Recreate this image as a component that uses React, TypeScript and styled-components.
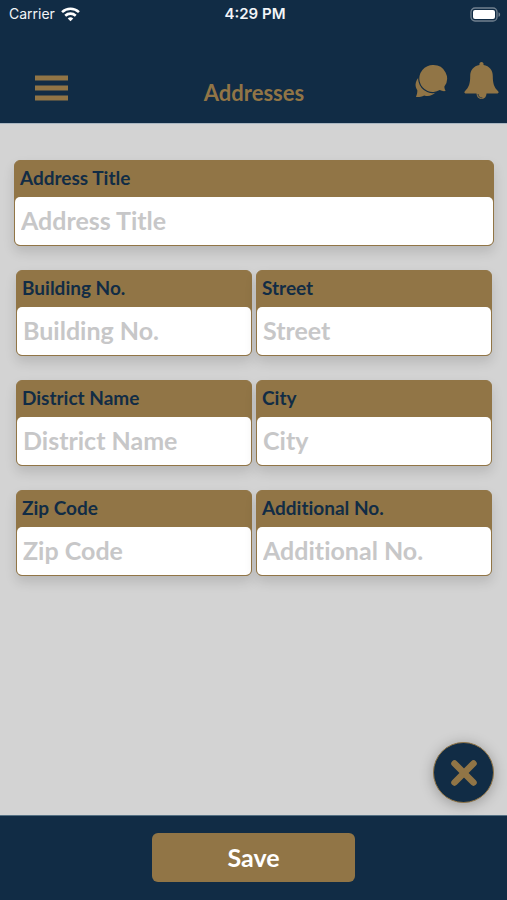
import React, { useId } from "react";
import styled, { createGlobalStyle } from "styled-components";

const navy = "#112c45";
const gold = "#917546";

const GlobalStyle = createGlobalStyle`
  * { box-sizing: border-box; }
  body {
    margin: 0;
    background: #d3d3d3;
    font-family: Lato, "Liberation Sans", sans-serif;
    font-variant-ligatures: none;
  }
  button { font: inherit; cursor: pointer; }
`;

const Screen = styled.div`
  display: flex;
  flex-direction: column;
  min-height: 100vh;
`;

const Header = styled.header`
  background: ${navy};
  border-bottom: 1px solid #a9b6c1;
`;

const StatusBar = styled.div`
  display: grid;
  grid-template-columns: 1fr auto 1fr;
  align-items: center;
  height: 28px;
  padding: 0 6px 0 9px;
  color: #f2f5f8;
  font: 400 14px/20px Inter, "Liberation Sans", sans-serif;
`;

const Carrier = styled.span`
  display: flex;
  align-items: center;
  gap: 6px;
`;

const Clock = styled.time`
  font-size: 15px;
  font-weight: 600;
`;

const Battery = styled.svg`
  justify-self: end;
`;

const NavBar = styled.div`
  display: grid;
  grid-template-columns: 1fr auto 1fr;
  align-items: center;
  height: 95px;
  padding: 24px 8px 0 35px;
  color: ${gold};
`;

const Title = styled.h1`
  margin: 0;
  padding: 10px 26px 0 0;
  font-size: 22px;
  line-height: 28px;
  font-weight: 700;
`;

const IconButton = styled.button`
  display: flex;
  padding: 0;
  border: 0;
  background: none;
  color: inherit;
  justify-self: start;
`;

const Actions = styled.div`
  display: flex;
  align-items: center;
  justify-self: end;
  gap: 16px;
  padding-bottom: 14px;
`;

const Main = styled.main`
  display: flex;
  flex: 1;
  flex-direction: column;
  justify-content: space-between;
  padding: 36px 13px 12px 14px;
`;

const Form = styled.form`
  display: flex;
  flex-direction: column;
  gap: 24px;
`;

const Pair = styled.div`
  display: grid;
  grid-template-columns: 1fr 1fr;
  gap: 4px;
  padding: 0 2px;
`;

const Field = styled.div`
  display: flex;
  flex-direction: column;
  min-width: 0;
  height: 86px;
  border: 1px solid ${gold};
  border-radius: 6px;
  background: ${gold};
  box-shadow: 0 6px 12px rgba(0, 0, 0, 0.13);
`;

const Label = styled.label`
  height: 36px;
  padding: 0 5px;
  color: ${navy};
  font-size: 19px;
  line-height: 34px;
  font-weight: 700;
`;

const Input = styled.input`
  flex: 1;
  width: 100%;
  min-width: 0;
  padding: 0 6px 2px;
  border: 0;
  border-radius: 5px;
  background: #fff;
  color: ${navy};
  font: 700 25px/30px Lato, "Liberation Sans", sans-serif;
  font-variant-ligatures: none;
  &::placeholder { color: #c7c7c8; opacity: 1; }
`;

const CloseButton = styled.button`
  display: grid;
  place-items: center;
  align-self: flex-end;
  width: 61px;
  height: 61px;
  padding: 0;
  border: 1px solid ${gold};
  border-radius: 50%;
  background: ${navy};
  color: ${gold};
  box-shadow: 0 2px 14px rgba(0, 0, 0, 0.28);
`;

const Footer = styled.footer`
  display: flex;
  justify-content: center;
  padding: 17px 0 18px;
  border-top: 1px solid #547083;
  background: ${navy};
`;

const SaveButton = styled.button`
  width: 40%;
  height: 49px;
  padding: 0 0 2px;
  border: 0;
  border-radius: 6px;
  background: ${gold};
  color: #fff;
  font-size: 25px;
  line-height: 30px;
  font-weight: 700;
`;

function AddressField({ name }: { name: string }) {
  const id = useId();
  return (
    <Field>
      <Label htmlFor={id}>{name}</Label>
      <Input id={id} type="text" placeholder={name} />
    </Field>
  );
}

const pairs = [
  ["Building No.", "Street"],
  ["District Name", "City"],
  ["Zip Code", "Additional No."],
];

export default function App() {
  return (
    <Screen>
      <GlobalStyle />
      <Header>
        <StatusBar>
          <Carrier>
            Carrier
            <svg width="19" height="15" viewBox="0 0 18 14" fill="none" stroke="#fff" strokeWidth="2.4" aria-hidden="true">
              <path d="M1 4.8C5.5.5 12.5.5 17 4.8" />
              <path d="M4 8.2c2.9-2.7 7.1-2.7 10 0" />
              <path d="M6.4 10.7c1.5-1.5 3.7-1.5 5.2 0L9 13.5z" fill="#fff" stroke="none" />
            </svg>
          </Carrier>
          <Clock>4:29 PM</Clock>
          <Battery width="31" height="15" viewBox="0 0 31 15" aria-hidden="true">
            <rect x="1" y="1" width="26" height="13" rx="4" fill="none" stroke="#71808f" strokeWidth="1.3" />
            <rect x="3" y="3" width="22" height="9" rx="2" fill="#fff" />
            <path d="M28.5 5.2c2.2.8 2.2 3.8 0 4.6z" fill="#71808f" />
          </Battery>
        </StatusBar>
        <NavBar>
          <IconButton type="button" aria-label="Menu">
            <svg width="33" height="26" viewBox="0 0 33 26" fill="currentColor">
              <path d="M0 0.5h33v5H0zM0 10.5h33v5H0zM0 20.5h33v5H0z" />
            </svg>
          </IconButton>
          <Title>Addresses</Title>
          <Actions>
            <IconButton type="button" aria-label="Messages">
              <svg width="34" height="34" viewBox="0 0 34 34" fill="currentColor">
                <path d="M4.5 13.5C2 16.500 1 20 1.800 23c.3 1.200 1 2.300 1.500 3.200.2 2.400-.5 4.500-1.300 6.700 3 .2 5.500-.2 8.200-1.500 4 1.300 8 .4 11.300-2.900z" />
                <path
                  d="M19.500 1a13.500 13.500 0 0 1 10.900 21.500c-.2 1.600.4 3 1.200 4.600-2.100.300-3.900 0-5.900-1A13.500 13.500 0 1 1 19.500 1z"
                  stroke={navy}
                  strokeWidth="2.200"
                  paintOrder="stroke"
                />
              </svg>
            </IconButton>
            <IconButton type="button" aria-label="Notifications">
              <svg width="35" height="38" viewBox="0 0 35 38" fill="currentColor">
                <path d="M17.500 0c1.700 0 2.300 1.400 2 2.900 6 1.100 9.300 5.100 9.300 11.300 0 7.200 1.300 11 5.100 14.800 1.300 1.200.8 2.600-1 2.600H2.100c-1.800 0-2.300-1.400-1-2.600 3.800-3.800 5.100-7.600 5.100-14.800 0-6.200 3.300-10.200 9.300-11.300-.3-1.500.3-2.900 2-2.900z" />
                <path d="M12.500 31h10c0 3.700-2 6-5 6s-5-2.300-5-6z" />
                <path d="M14 32c.2 2.500 1.700 4 4.500 4" fill="none" stroke={navy} strokeWidth=".8" />
              </svg>
            </IconButton>
          </Actions>
        </NavBar>
      </Header>
      <Main>
        <Form id="address-form" onSubmit={(event) => event.preventDefault()}>
          <AddressField name="Address Title" />
          {pairs.map((names) => (
            <Pair key={names[0]}>
              {names.map((name) => (
                <AddressField key={name} name={name} />
              ))}
            </Pair>
          ))}
        </Form>
        <CloseButton type="button" aria-label="Close">
          <svg width="28" height="28" viewBox="0 0 28 28" fill="none" stroke="currentColor" strokeWidth="6.500" strokeLinecap="round">
            <path d="M4.500 4.500l19 19M23.500 4.500l-19 19" />
          </svg>
        </CloseButton>
      </Main>
      <Footer>
        <SaveButton type="submit" form="address-form">Save</SaveButton>
      </Footer>
    </Screen>
  );
}
